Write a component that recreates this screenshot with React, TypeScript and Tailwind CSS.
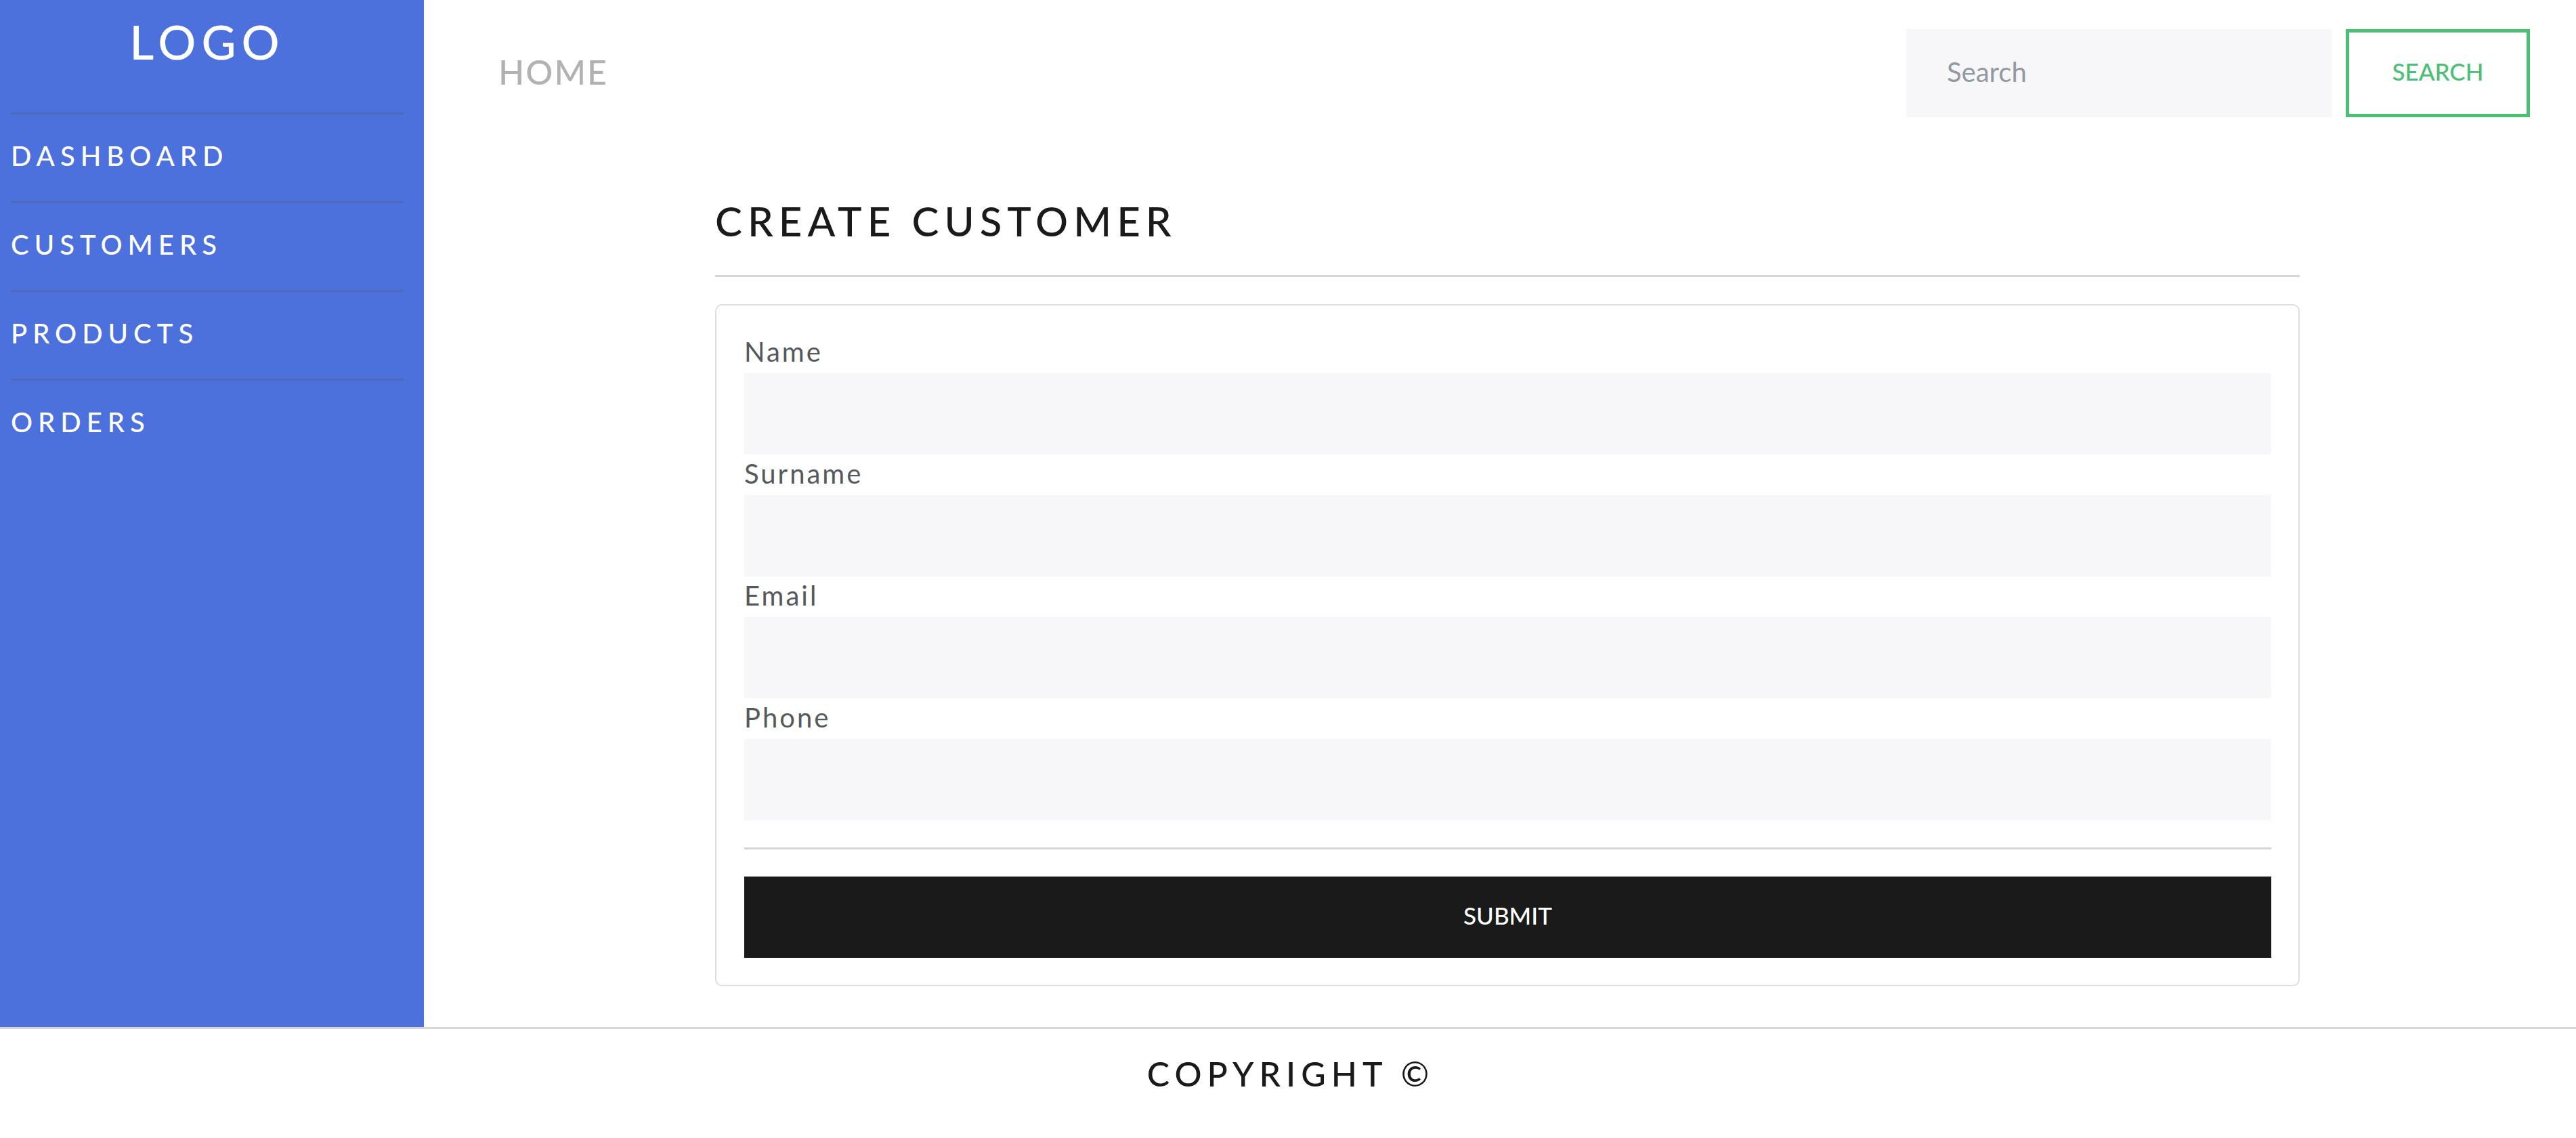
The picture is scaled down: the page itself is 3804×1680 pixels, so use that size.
import React from "react";

const links = ["DASHBOARD", "CUSTOMERS", "PRODUCTS", "ORDERS"];

const fields = [
  { id: "name", label: "Name", type: "text" },
  { id: "surname", label: "Surname", type: "text" },
  { id: "email", label: "Email", type: "email" },
  { id: "phone", label: "Phone", type: "tel" },
];

function Sidebar() {
  return (
    <aside className="w-[626px] shrink-0 bg-[#4c71dd] pr-[30px] pl-4 text-white">
      <div className="flex h-[166px] items-start justify-center pt-3.5">
        <a href="#" className="text-[70px] leading-[94px] font-medium tracking-[8px]">
          LOGO
        </a>
      </div>
      <nav>
        <ul>
          {links.map((link) => (
            <li key={link} className="h-[131px] border-t-[3px] border-[#5069b8] pt-[31px]">
              <a href="#" className="block text-[40px] leading-[60px] font-medium tracking-[8px]">
                {link}
              </a>
            </li>
          ))}
        </ul>
      </nav>
    </aside>
  );
}

function TopBar() {
  return (
    <header className="flex h-[216px] items-center justify-between pr-[68px] pl-[110px]">
      <a
        href="#"
        className="pb-1 text-[50px] leading-[76px] font-medium tracking-[2px] text-[#b2b2b2]"
      >
        HOME
      </a>
      <form className="flex gap-5" onSubmit={(e) => e.preventDefault()}>
        <input
          type="search"
          aria-label="Search"
          placeholder="Search"
          className="h-[130px] w-[629px] bg-[#f7f7f9] px-[60px] pb-1 text-[40px] text-[#55595c] outline-none placeholder:text-[#919aa1]"
        />
        <button
          type="submit"
          className="h-[130px] w-[272px] border-[5px] border-[#4bbf73] pb-1.5 text-[35px] font-medium text-[#4bbf73]"
        >
          SEARCH
        </button>
      </form>
    </header>
  );
}

function CustomerForm() {
  return (
    <form
      className="rounded-[10px] border-2 border-[#dfdfdf] py-10 pr-10 pl-[41px]"
      onSubmit={(e) => e.preventDefault()}
    >
      {fields.map((f) => (
        <div key={f.id}>
          <label
            htmlFor={f.id}
            className="block pb-1 text-[40px] leading-[56px] tracking-[3px] text-[#55595c]"
          >
            {f.label}
          </label>
          <input
            id={f.id}
            type={f.type}
            className="block h-[120px] w-full bg-[#f7f7f9] px-[60px] text-[40px] text-[#55595c] outline-none"
          />
        </div>
      ))}
      <hr className="my-10 border-t-[3px] border-[#d6d6d6]" />
      <button
        type="submit"
        className="block h-[120px] w-full bg-[#1a1a1a] pb-1.5 text-[35px] font-medium text-white"
      >
        SUBMIT
      </button>
    </form>
  );
}

export default function App() {
  return (
    <div className="flex min-h-screen flex-col bg-white font-['Lato',sans-serif]">
      <div className="flex">
        <Sidebar />
        <div className="min-w-0 flex-1">
          <TopBar />
          <main className="mr-[408px] ml-[430px] pt-[75px] pb-[60px]">
            <h1 className="pb-1 text-[60px] leading-[71px] font-medium tracking-[8px] text-[#1a1a1a]">
              CREATE CUSTOMER
            </h1>
            <hr className="my-10 border-t-[3px] border-[#d6d6d6]" />
            <CustomerForm />
          </main>
        </div>
      </div>
      <footer className="border-t-[3px] border-[#d6d6d6] pt-9 pl-2 text-center">
        <p className="text-[50px] leading-[60px] font-medium tracking-[8px] text-[#1a1a1a]">
          COPYRIGHT ©
        </p>
      </footer>
    </div>
  );
}
